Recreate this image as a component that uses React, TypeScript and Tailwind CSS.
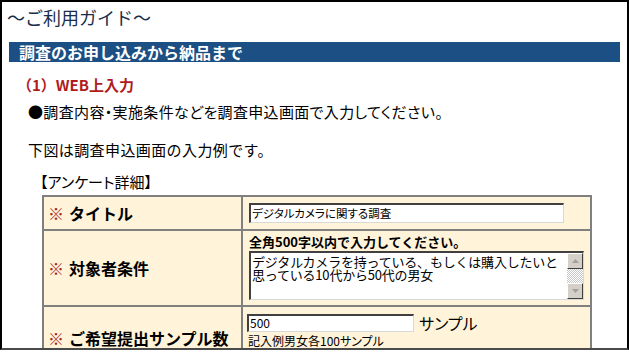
import React from "react";

const jp = "font-['Noto_Sans_CJK_JP','Noto_Sans_CJK_SC',sans-serif]";

function Inset({ className, children }: { className?: string; children?: React.ReactNode }) {
  return (
    <div
      className={
        "bg-white border-t-2 border-l-2 border-b border-r border-t-[#404040] border-l-[#404040] border-b-[#d8d8d8] border-r-[#d8d8d8] " +
        (className || "")
      }
    >
      {children}
    </div>
  );
}

function ScrollBtn({ up }: { up?: boolean }) {
  return (
    <div className="w-[16px] h-[16px] bg-[#d4d0c8] border border-t-white border-l-white border-b-[#404040] border-r-[#404040] flex items-center justify-center">
      <svg width="7" height="4" viewBox="0 0 7 4">
        {up ? <path d="M0 4 L3.5 0 L7 4 Z" fill="#a0a0a0" /> : <path d="M0 0 L3.5 4 L7 0 Z" fill="#a0a0a0" />}
      </svg>
    </div>
  );
}

function Label({ text }: { text: string }) {
  return (
    <div className="bg-[#fff3da] flex items-center pl-[4px] text-[16px] font-bold text-black leading-[20px] whitespace-nowrap">
      <span className="text-[#a8281e] font-normal mr-[5px]">※</span>
      <span>{text}</span>
    </div>
  );
}

export default function App() {
  return (
    <div className={"w-[629px] h-[358px] bg-white " + jp}>
      <div className="w-[629px] h-[350px] border-2 border-black border-b-[#4a4a4a] overflow-hidden">
        <div className="pt-[3px] pl-[5px] text-[18px] leading-[24px] text-[#1a2e4c]">～ご利用ガイド～</div>
        <div className="mt-[13px] mx-[7px] h-[20px] bg-[#1c4f83] pl-[10px] text-[16px] leading-[20px] font-bold text-white">
          調査のお申し込みから納品まで
        </div>
        <div className="mt-[13px] pl-[15px] text-[15px] leading-[20px] font-bold text-[#b01c1c]">（1）WEB上入力</div>
        <div className="mt-[7px] pl-[26px] text-[15px] leading-[20px] tracking-[0.35px] text-black [font-feature-settings:'palt']">
          ●調査内容・実施条件などを調査申込画面で入力してください。
        </div>
        <div className="mt-[18px] pl-[26px] text-[15px] leading-[20px] tracking-[0.4px] text-black">下図は調査申込画面の入力例です。</div>
        <div className="mt-[12px] pl-[38px] text-[15px] leading-[20px] text-black [font-feature-settings:'palt']">
          【アンケート詳細】
        </div>
        <div className="mt-[3px] ml-[40px] w-[550px] bg-[#808080] p-[2px] grid grid-cols-[197px_1fr] gap-[2px]">
          <Label text="タイトル" />
          <div className="bg-[#fff3da] h-[32px] pl-[6px] flex items-center">
            <Inset className="w-[315px] h-[20px] pl-[1px] text-[11.5px] leading-[16px] text-black [font-feature-settings:'palt']">
              デジタルカメラに関する調査
            </Inset>
          </div>

          <Label text="対象者条件" />
          <div className="bg-[#fff3da] h-[74px] pl-[6px] pt-[4px]">
            <div className="text-[13px] leading-[14px] font-bold text-black">全角500字以内で入力してください。</div>
            <Inset className="mt-[2px] w-[335px] h-[49px] flex">
              <div className="flex-1 pl-[1px] pt-[2px] text-[13px] leading-[13px] tracking-[-0.2px] text-black whitespace-nowrap overflow-hidden">
                <div>デジタルカメラを持っている、もしくは購入したいと</div>
                <div>思っている10代から50代の男女</div>
              </div>
              <div className="w-[16px] flex flex-col">
                <ScrollBtn up />
                <div className="flex-1 bg-[repeating-conic-gradient(#c8c8c8_0%_25%,#ffffff_0%_50%)] bg-[length:2px_2px]" />
                <ScrollBtn />
              </div>
            </Inset>
          </div>

          <Label text="ご希望提出サンプル数" />
          <div className="bg-[#fff3da] h-[62px] pl-[4px] pt-[7px]">
            <div className="flex items-center">
              <Inset className="w-[167px] h-[18px] pl-[1px] text-[12px] leading-[14px] text-black">500</Inset>
              <span className="ml-[5px] text-[16px] leading-[18px] text-black [font-feature-settings:'palt']">サンプル</span>
            </div>
            <div className="mt-[2px] pl-[1px] text-[12px] leading-[14px] text-black [font-feature-settings:'palt']">
              記入例男女各100サンプル
            </div>
          </div>
        </div>
      </div>
    </div>
  );
}
